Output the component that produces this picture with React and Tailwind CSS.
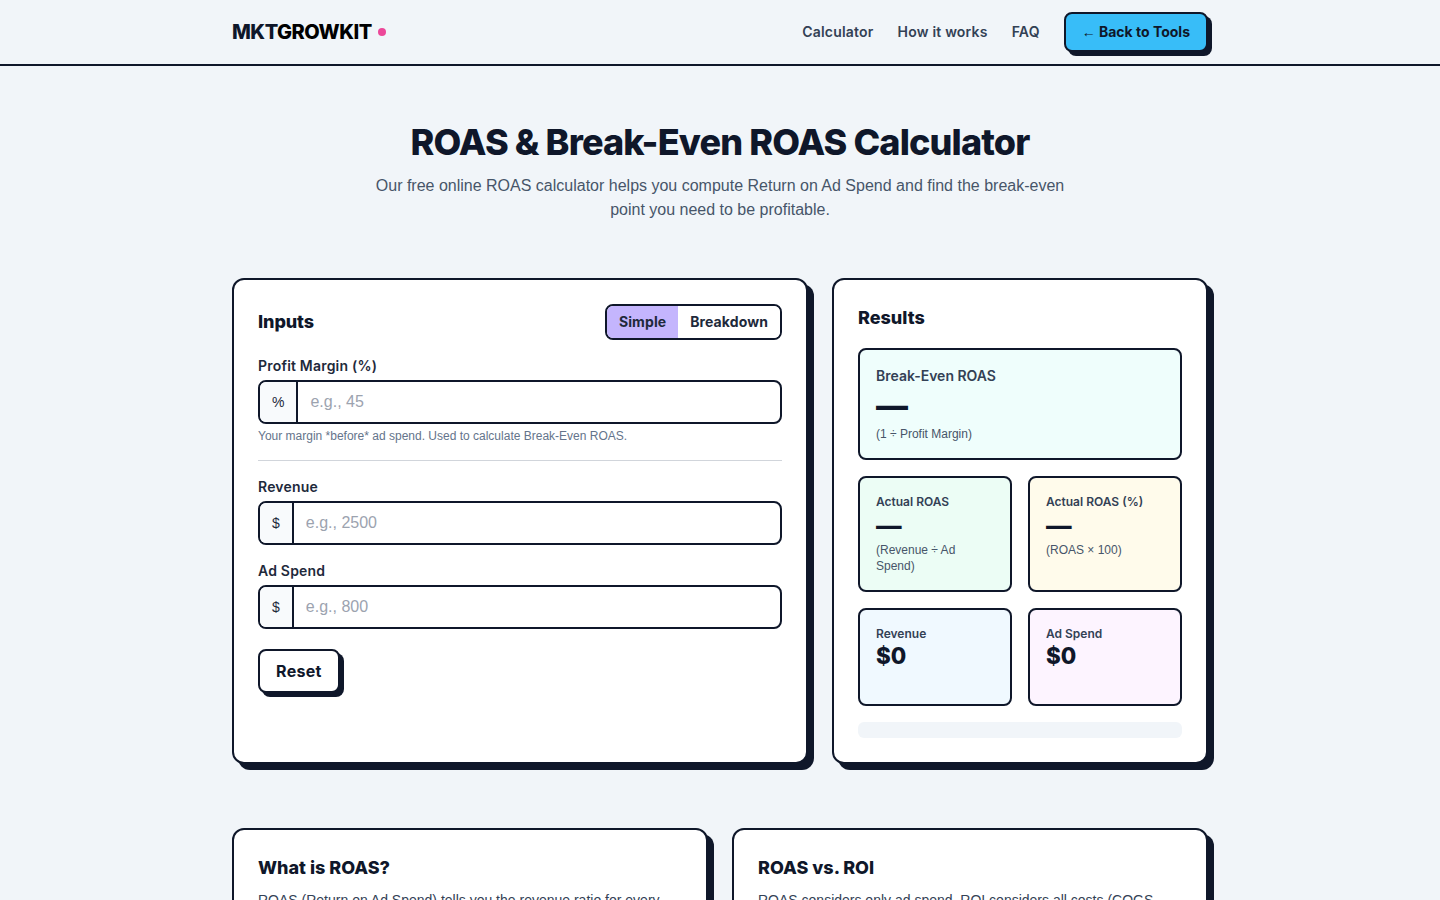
import React, { useState } from "react";

const heading = "font-['Inter',sans-serif]";

const Card = ({ className = "", children }) => (
  <div className={`bg-white border-2 border-[#0f172a] rounded-xl p-6 shadow-[6px_6px_0_#0f172a] ${className}`}>
    {children}
  </div>
);

const Field = ({ label, prefix, placeholder, value, onChange, hint }) => (
  <div>
    <label className={`${heading} block text-sm font-semibold tracking-[0.2px] text-[#1e293b] mb-1`}>{label}</label>
    <div className="flex h-11 border-2 border-[#0f172a] rounded-lg overflow-hidden">
      <span className="flex items-center px-3 text-sm text-[#1e293b] bg-[#f8fafc] border-r-2 border-[#0f172a]">
        {prefix}
      </span>
      <input
        type="text"
        value={value}
        onChange={(e) => onChange(e.target.value)}
        placeholder={placeholder}
        className="flex-1 px-3 text-base text-[#0f172a] placeholder:text-[#9ca3af] outline-none"
      />
    </div>
    {hint && <p className="text-xs text-[#64748b] mt-1">{hint}</p>}
  </div>
);

const Stat = ({ label, value, note, className, size = "text-[25.6px]" }) => (
  <div className={`border-2 border-[#0f172a] rounded-lg p-4 ${className}`}>
    <p className={`${heading} text-xs font-semibold text-[#334155]`}>{label}</p>
    <p className={`${heading} ${size} leading-[1.25] font-extrabold text-[#0f172a]`}>{value}</p>
    {note && <p className="text-xs text-[#475569]">{note}</p>}
  </div>
);

const App = () => {
  const [mode, setMode] = useState("simple");
  const [margin, setMargin] = useState("");
  const [revenue, setRevenue] = useState("");
  const [spend, setSpend] = useState("");

  const m = Number(margin) || 0;
  const r = Number(revenue) || 0;
  const s = Number(spend) || 0;

  const breakEven = m > 0 ? `${(100 / m).toFixed(2)}x` : "—";
  const roas = s > 0 ? `${(r / s).toFixed(2)}x` : "—";
  const roasPct = s > 0 ? `${((r / s) * 100).toFixed(0)}%` : "—";

  const handleReset = () => {
    setMargin("");
    setRevenue("");
    setSpend("");
  };

  return (
    <div className="h-screen overflow-hidden bg-[#f1f5f9] text-[#0f172a] font-['Liberation_Sans',Arial,sans-serif]">

      {/* Header */}
      <header className="border-b-2 border-[#0f172a]">
        <div className={`${heading} max-w-5xl mx-auto px-6 h-16 flex items-center justify-between`}>
          <a href="#" className="flex items-center gap-1.5 text-xl font-extrabold tracking-tight">
            <span>MKT<span className="text-black">GROWKIT</span></span>
            <span className="w-2 h-2 rounded-full bg-[#ec4899]"></span>
          </a>
          <nav className="flex items-center gap-6 text-sm font-semibold tracking-[0.2px] text-[#334155]">
            <a href="#calculator">Calculator</a>
            <a href="#how">How it works</a>
            <a href="#faq">FAQ</a>
            <a
              href="#"
              className="h-10 px-4 flex items-center whitespace-pre font-bold tracking-normal text-[#0f172a] bg-[#38bdf8] border-2 border-[#0f172a] rounded-lg shadow-[4px_4px_0_#0f172a]"
            >
              <span className="font-['Liberation_Sans',sans-serif]">←</span> Back to Tools
            </a>
          </nav>
        </div>
      </header>

      <main className="max-w-5xl mx-auto px-6">
        {/* Hero */}
        <section className="py-14 text-center">
          <h1 className={`${heading} text-4xl font-extrabold tracking-[-0.024em]`}>ROAS & Break-Even ROAS Calculator</h1>
          <p className="max-w-[720px] mx-auto mt-3 text-base text-[#475569]">
            Our free online ROAS calculator helps you compute Return on Ad Spend and find the break-even point you need to be profitable.
          </p>
        </section>

        {/* Calculator */}
        <section id="calculator" className="grid grid-cols-5 gap-6">
          <Card className="col-span-3">
            <div className="flex items-center justify-between mb-4">
              <h2 className={`${heading} text-lg font-extrabold tracking-[-0.1px]`}>Inputs</h2>
              <div className={`${heading} h-9 flex border-2 border-[#0f172a] rounded-lg overflow-hidden text-sm font-bold tracking-[0.1px] text-[#1e293b]`}>
                <button onClick={() => setMode("simple")} className={`px-3 ${mode === "simple" ? "bg-[#c4b5fd]" : "bg-white"}`}>
                  Simple
                </button>
                <button onClick={() => setMode("breakdown")} className={`px-3 ${mode === "breakdown" ? "bg-[#c4b5fd]" : "bg-white"}`}>
                  Breakdown
                </button>
              </div>
            </div>

            <Field
              label="Profit Margin (%)"
              prefix="%"
              placeholder="e.g., 45"
              value={margin}
              onChange={setMargin}
              hint="Your margin *before* ad spend. Used to calculate Break-Even ROAS."
            />
            <hr className="my-4 border-[#d1d5db]" />
            <div className="space-y-4">
              <Field label="Revenue" prefix="$" placeholder="e.g., 2500" value={revenue} onChange={setRevenue} />
              <Field label="Ad Spend" prefix="$" placeholder="e.g., 800" value={spend} onChange={setSpend} />
            </div>

            <button
              onClick={handleReset}
              className={`${heading} mt-5 h-11 px-4 text-base font-bold tracking-[0.02em] bg-white border-2 border-[#0f172a] rounded-lg shadow-[4px_4px_0_#0f172a]`}
            >
              Reset
            </button>
          </Card>

          <Card className="col-span-2">
            <h2 className={`${heading} text-lg font-extrabold mb-4`}>Results</h2>
            <div className="grid grid-cols-2 gap-4">
              <div className="col-span-2 border-2 border-[#0f172a] rounded-lg p-4 bg-[#effefc]">
                <p className={`${heading} text-sm font-semibold text-[#334155]`}>Break-Even ROAS</p>
                <p className={`${heading} text-[32px] leading-[1.25] font-extrabold`}>{breakEven}</p>
                <p className="text-xs text-[#475569]">(1 ÷ Profit Margin)</p>
              </div>
              <Stat label="Actual ROAS" value={roas} note="(Revenue ÷ Ad Spend)" className="bg-[#ecfdf5]" />
              <Stat label="Actual ROAS (%)" value={roasPct} note="(ROAS × 100)" className="bg-[#fffbeb]" />
              <Stat label="Revenue" value={`$${r}`} size="text-[22.4px]" className="bg-[#f0f9ff] h-[98px]" />
              <Stat label="Ad Spend" value={`$${s}`} size="text-[22.4px]" className="bg-[#fdf4ff] h-[98px]" />
            </div>
            <div className="mt-4 h-4 rounded-md bg-[#f1f5f9]"></div>
          </Card>
        </section>

        {/* Explainers */}
        <section id="how" className="grid grid-cols-2 gap-6 mt-16">
          <Card>
            <h2 className={`${heading} text-lg font-extrabold mb-2`}>What is ROAS?</h2>
            <p className="text-sm text-[#334155]">
              ROAS (Return on Ad Spend) tells you the revenue ratio for every dollar spent on advertising.
            </p>
          </Card>
          <Card>
            <h2 className={`${heading} text-lg font-extrabold mb-2`}>ROAS vs. ROI</h2>
            <p className="text-sm text-[#334155]">
              ROAS considers only ad spend. ROI considers all costs (COGS, shipping, overhead).
            </p>
          </Card>
        </section>
      </main>
    </div>
  );
};

export default App;
